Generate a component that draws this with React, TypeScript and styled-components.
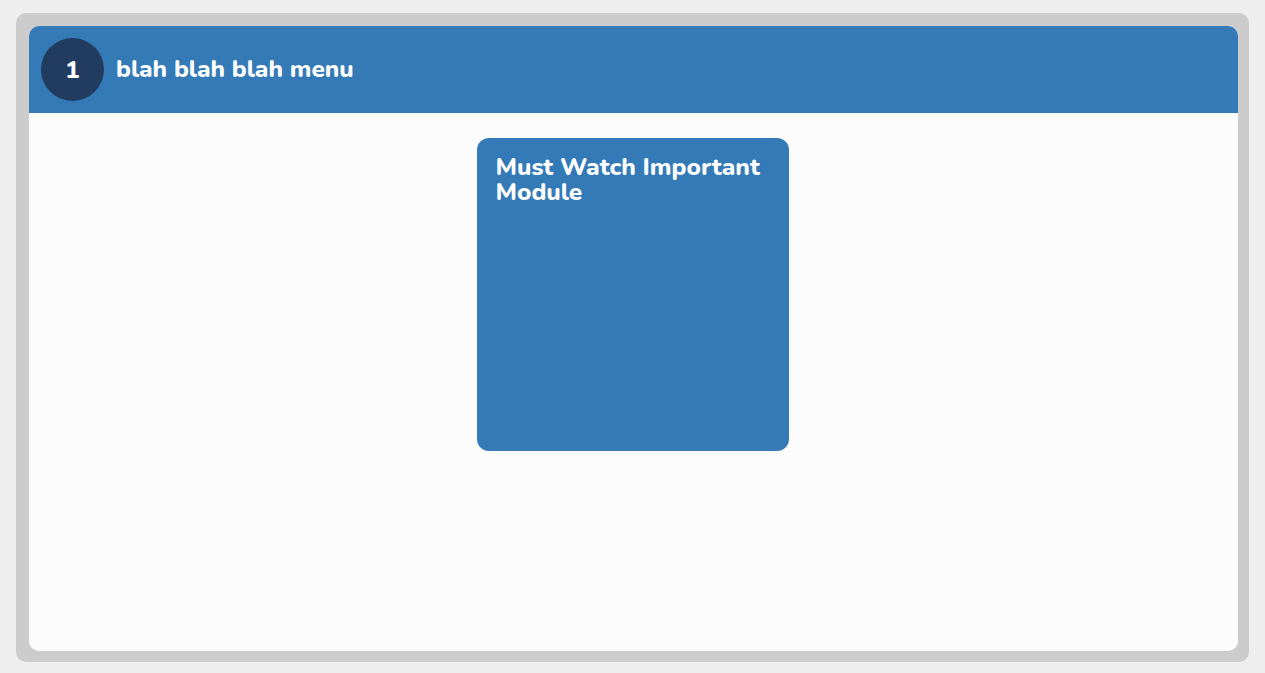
import React from 'react';
import styled, {createGlobalStyle} from "styled-components";

const GlobalStyle = createGlobalStyle`
  html, body {
    margin: 0;
    padding: 0;
    background-color: #eeeeee;
    font-family: "Nunito", Lato, "Noto Sans", sans-serif;
  }
`;

const PageWrapper = styled.div`
  padding: 13px 16px 11px 16px;
  height: 673px;
  box-sizing: border-box;
`;

const Frame = styled.div`
  height: 100%;
  box-sizing: border-box;
  background-color: #cccccc;
  border-radius: 10px;
  padding: 13px 11px 11px 13px;
`;

const Panel = styled.div`
  display: flex;
  flex-direction: column;
  height: 100%;
  background-color: #fcfcfc;
  border-radius: 10px;
  overflow: hidden;
`;

const Header = styled.div`
  display: flex;
  align-items: center;
  gap: 12px;
  height: 87px;
  padding: 0 12px;
  background-color: #337ab7;
  flex-shrink: 0;
`;

const StepBadge = styled.div`
  display: flex;
  justify-content: center;
  align-items: center;
  width: 63px;
  height: 63px;
  border-radius: 50%;
  background-color: #223c5f;
  color: #fff;
  font-size: 24px;
  font-weight: 800;
`;

const HeaderTitle = styled.div`
  color: #fff;
  font-size: 24.4px;
  font-weight: 800;
  padding-bottom: 2px;
`;

const Content = styled.div`
  display: flex;
  justify-content: center;
  padding-top: 25px;
  padding-right: 2px;
`;

const ModuleCard = styled.div`
  width: 312px;
  height: 313px;
  box-sizing: border-box;
  padding: 17px 19px;
  background-color: #337ab7;
  border-radius: 12px;
  color: #fff;
  font-size: 24.5px;
  font-weight: 800;
  line-height: 25px;
`;

export default function App() {
    return (
        <PageWrapper>
            <GlobalStyle/>
            <Frame>
                <Panel>
                    <Header>
                        <StepBadge>1</StepBadge>
                        <HeaderTitle>blah blah blah menu</HeaderTitle>
                    </Header>
                    <Content>
                        <ModuleCard>Must Watch Important Module</ModuleCard>
                    </Content>
                </Panel>
            </Frame>
        </PageWrapper>
    );
}
